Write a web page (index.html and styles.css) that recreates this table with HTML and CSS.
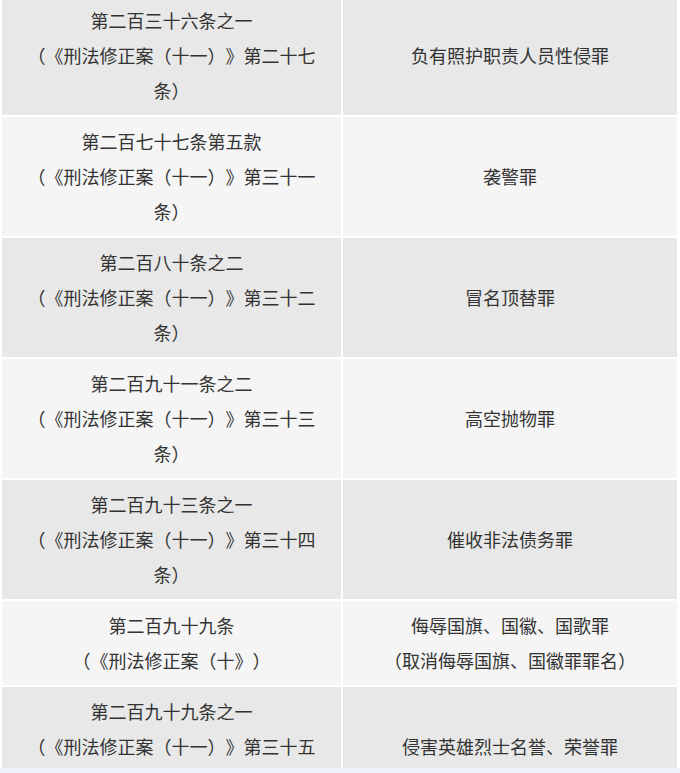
FILE: index.html
```html
<!DOCTYPE html>
<html lang="zh-CN">
<head>
<meta charset="utf-8">
<link rel="stylesheet" href="styles.css">
</head>
<body>
<div class="page">
  <table class="law-table">
    <colgroup><col class="col-article"><col class="col-crime"></colgroup>
    <tbody>
      <tr class="row-dark">
        <td>第二百三十六条之一<br>（《刑法修正案（十一）》第二十七条）</td>
        <td>负有照护职责人员性侵罪</td>
      </tr>
      <tr class="row-light">
        <td>第二百七十七条第五款<br>（《刑法修正案（十一）》第三十一条）</td>
        <td>袭警罪</td>
      </tr>
      <tr class="row-dark">
        <td>第二百八十条之二<br>（《刑法修正案（十一）》第三十二条）</td>
        <td>冒名顶替罪</td>
      </tr>
      <tr class="row-light">
        <td>第二百九十一条之二<br>（《刑法修正案（十一）》第三十三条）</td>
        <td>高空抛物罪</td>
      </tr>
      <tr class="row-dark">
        <td>第二百九十三条之一<br>（《刑法修正案（十一）》第三十四条）</td>
        <td>催收非法债务罪</td>
      </tr>
      <tr class="row-light">
        <td>第二百九十九条<br>（《刑法修正案（十》）</td>
        <td>侮辱国旗、国徽、国歌罪<br>（取消侮辱国旗、国徽罪罪名）</td>
      </tr>
      <tr class="row-dark">
        <td>第二百九十九条之一<br>（《刑法修正案（十一）》第三十五条）</td>
        <td>侵害英雄烈士名誉、荣誉罪</td>
      </tr>
    </tbody>
  </table>
</div>
<div class="bottom-bar"></div>
</body>
</html>
```
FILE: styles.css
```css
html, body {
  margin: 0;
  padding: 0;
  background: #ffffff;
}

.page {
  overflow: hidden;
  height: 773px;
}

.law-table {
  margin-top: -6px;
  width: 679px;
  table-layout: fixed;
  border-collapse: separate;
  border-spacing: 2px;
  font-family: "Noto Sans CJK SC", "Noto Sans", sans-serif;
  font-size: 18px;
  line-height: 35px;
  color: #333333;
  text-spacing-trim: space-all;
  font-feature-settings: "halt" 0, "chws" 0, "palt" 0;
}

.col-article { width: 339px; }
.col-crime { width: 334px; }

.law-table td {
  box-sizing: border-box;
  padding: 7px 20px;
  text-align: center;
  vertical-align: middle;
}

.row-dark td { background: #e8e8e8; }
.row-light td { background: #f5f5f5; }

.bottom-bar {
  position: fixed;
  left: 0;
  right: 0;
  bottom: 0;
  height: 5px;
  background: #eef3f9;
}
```
